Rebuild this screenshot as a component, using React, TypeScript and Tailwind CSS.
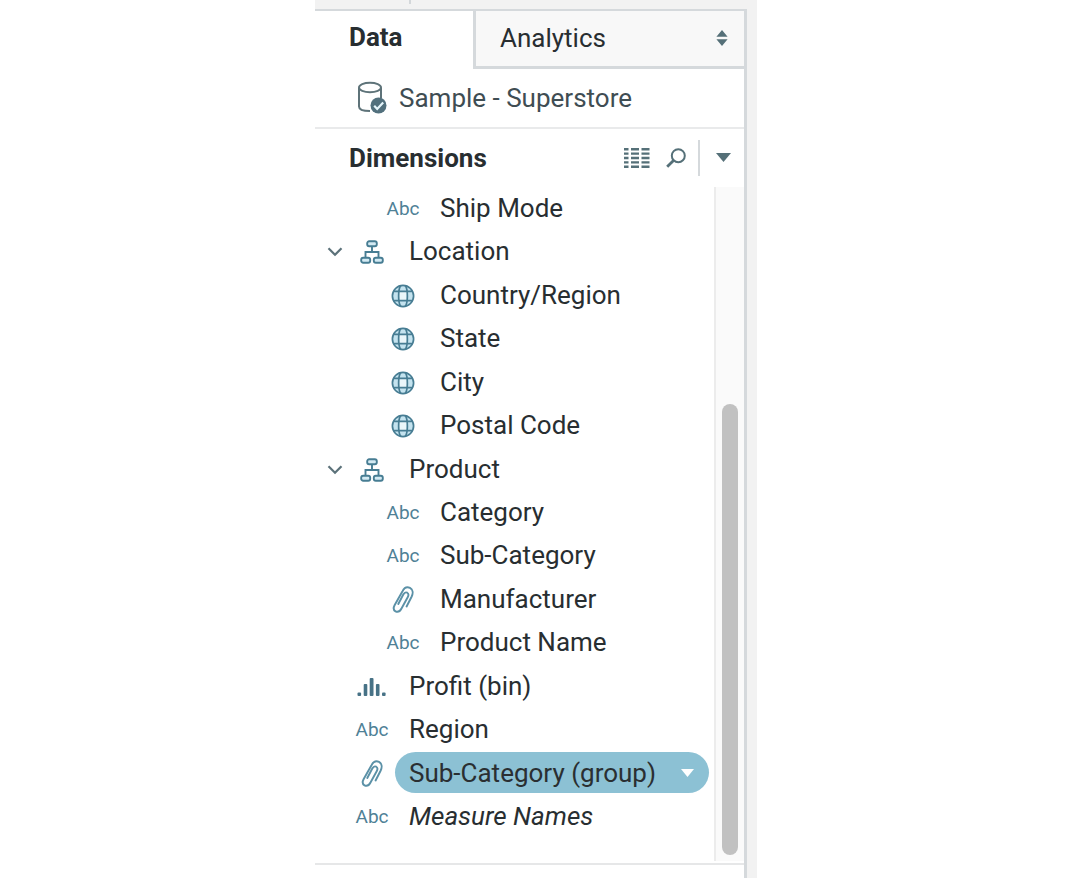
import React from "react";

type IconKind = "abc" | "globe" | "clip" | "hierarchy" | "bars";

interface Field {
  name: string;
  icon: IconKind;
  nested?: boolean;
  folder?: boolean;
  selected?: boolean;
  italic?: boolean;
}

const fields: Field[] = [
  { name: "Ship Mode", icon: "abc", nested: true },
  { name: "Location", icon: "hierarchy", folder: true },
  { name: "Country/Region", icon: "globe", nested: true },
  { name: "State", icon: "globe", nested: true },
  { name: "City", icon: "globe", nested: true },
  { name: "Postal Code", icon: "globe", nested: true },
  { name: "Product", icon: "hierarchy", folder: true },
  { name: "Category", icon: "abc", nested: true },
  { name: "Sub-Category", icon: "abc", nested: true },
  { name: "Manufacturer", icon: "clip", nested: true },
  { name: "Product Name", icon: "abc", nested: true },
  { name: "Profit (bin)", icon: "bars" },
  { name: "Region", icon: "abc" },
  { name: "Sub-Category (group)", icon: "clip", selected: true },
  { name: "Measure Names", icon: "abc", italic: true },
];

function FieldIcon({ kind }: { kind: IconKind }) {
  switch (kind) {
    case "abc":
      return <span className="text-[19px] leading-6 text-[#4f8196]">Abc</span>;
    case "globe":
      return (
        <svg width="24" height="24" viewBox="0 0 24 24" fill="none" stroke="#477d93" strokeWidth="1.7" aria-hidden="true">
          <circle cx="12" cy="12" r="10.6" fill="#c4e3ef" />
          <path d="M8.2 7h7.600v10H8.200z" fill="#eaf6fa" stroke="none" />
          <path d="M9.500 1.800C7 6 7 18 9.500 22.200M14.500 1.800C17 6 17 18 14.500 22.200M2.500 7.300h19M2.500 16.700h19" />
        </svg>
      );
    case "clip":
      return (
        <svg width="22" height="27" viewBox="0 0 22 27" fill="none" stroke="#5b91a7" strokeWidth="1.9" strokeLinecap="round" aria-hidden="true">
          <path d="M14.600 20.500 19.700 10.500C21.400 6.800 20.800 3.300 18 1.900C15.200.6 12.200 1.900 10.500 5.200L2.700 19C1.100 22 1.500 24.200 3.500 25.300C5.600 26.400 8 25.300 9.500 22.500L15.700 11.200C16.800 9.100 16.600 7.500 15.200 6.700C13.800 6 12.300 6.700 11.300 8.500L6.300 18" />
        </svg>
      );
    case "hierarchy":
      return (
        <svg width="24" height="24" viewBox="0 0 24 24" fill="none" stroke="#477d93" strokeWidth="1.9" aria-hidden="true">
          <rect x="7.200" y="1.300" width="9.600" height="5" rx="2" fill="#d3eaf3" />
          <rect x="1.200" y="17.700" width="9" height="5" rx="2" fill="#d3eaf3" />
          <rect x="13.800" y="17.700" width="9" height="5" rx="2" fill="#d3eaf3" />
          <path d="M12 6v6M5.500 18v-6h13v6" />
        </svg>
      );
    case "bars":
      return (
        <svg width="30" height="20" viewBox="0 0 30 20" fill="#477286" aria-hidden="true">
          <rect x="0.500" y="15.500" width="3.600" height="3.500" rx="1" />
          <rect x="6.700" y="7" width="3.600" height="12" rx="1" />
          <rect x="12.700" y="1" width="3.800" height="18" rx="1" />
          <rect x="18.900" y="7" width="3.600" height="12" rx="1" />
          <rect x="25" y="15.500" width="3.600" height="3.500" rx="1" />
        </svg>
      );
  }
}

function FieldRow({ field }: { field: Field }) {
  return (
    <li className={field.nested ? "flex items-center pl-[31px]" : "flex items-center"}>
      <span className="flex w-10 shrink-0 justify-center">
        {field.folder && (
          <button type="button" aria-label={"Collapse " + field.name} className="pt-0.5">
            <svg width="16" height="10" viewBox="0 0 16 10" fill="none" stroke="#5c727a" strokeWidth="2.2" aria-hidden="true">
              <path d="M1.500 1.200 8 7.800l6.500-6.600" />
            </svg>
          </button>
        )}
      </span>
      <span className="flex w-[34px] shrink-0 justify-center pt-0.5">
        <FieldIcon kind={field.icon} />
      </span>
      {field.selected ? (
        <button
          type="button"
          className="ml-1.5 mr-[5px] flex h-[41px] grow items-center justify-between rounded-full bg-[#8cc1d4] pl-3.5 pr-[15px] text-[#2a2f32]"
        >
          <span className="whitespace-nowrap">{field.name}</span>
          <svg width="13" height="8" viewBox="0 0 13 8" fill="#ffffff" aria-hidden="true">
            <path d="M0 0h13L6.500 8z" />
          </svg>
        </button>
      ) : (
        <span className={field.italic ? "ml-5 whitespace-nowrap italic" : "ml-5 whitespace-nowrap"}>{field.name}</span>
      )}
    </li>
  );
}

export default function App() {
  return (
    <div className="flex min-h-screen justify-center bg-white pb-0.5 pr-1.5 font-['Roboto','Liberation_Sans',sans-serif] text-[26px] leading-8 text-[#282e31]">
      <div className="flex w-full max-w-[442px] flex-col bg-[#f2f2f2]">
        <div className="flex h-[9px] shrink-0">
          <span className="ml-[94px] h-1 w-0.5 bg-[#d3d7da]" />
        </div>
        <aside className="mr-2.5 flex grow flex-col border-r-[3px] border-t-2 border-[#d5d9dc] bg-white">
          <div role="tablist" className="flex h-[58px] shrink-0">
            <button type="button" role="tab" aria-selected="true" className="w-[158px] pb-1.5 pl-[34px] text-left font-bold">
              Data
            </button>
            <button
              type="button"
              role="tab"
              aria-selected="false"
              className="flex grow items-center justify-between border-b-[3px] border-l-[3px] border-[#d5d9dc] bg-[#f8f8f8] pb-0.5 pl-6 pr-4"
            >
              <span>Analytics</span>
              <svg width="12" height="16" viewBox="0 0 12 16" fill="#557078" aria-hidden="true">
                <path d="M6 0l5.600 6.800H.4zM6 16 .4 9.200h11.200z" />
              </svg>
            </button>
          </div>

          <button type="button" className="flex h-[60px] shrink-0 items-center border-b-2 border-[#e9eaeb] pl-[42px] text-[#3f4d53]">
            <svg width="31" height="34" viewBox="0 0 31 34" fill="none" aria-hidden="true">
              <path d="M2 7v18.500C2 28.600 6.500 30 13 30M24 7v10" stroke="#5e7379" strokeWidth="2" />
              <ellipse cx="13" cy="6.500" rx="11" ry="4.700" stroke="#5e7379" strokeWidth="2" />
              <circle cx="21.500" cy="24.500" r="8" fill="#52707d" />
              <path d="M17.200 24.800l3 3.200 6-6.500" stroke="#e6f6fc" strokeWidth="2.200" />
            </svg>
            <span className="ml-[11px]">Sample - Superstore</span>
          </button>

          <header className="flex h-[57px] shrink-0 items-center">
            <h2 className="ml-[34px] grow font-bold">Dimensions</h2>
            <button type="button" aria-label="View data" className="mr-4">
              <svg width="26" height="20" viewBox="0 0 26 20" stroke="#557078" strokeWidth="2.400" aria-hidden="true">
                <path d="M0 1.200h4.500M7 1.200h8M17.500 1.200h8M0 5.600h4.500M7 5.600h8M17.500 5.600h8M0 10h4.500M7 10h8M17.500 10h8M0 14.400h4.500M7 14.400h8M17.500 14.400h8M0 18.800h4.500M7 18.800h8M17.500 18.800h8" />
              </svg>
            </button>
            <button type="button" aria-label="Find field" className="mr-3">
              <svg width="20" height="20" viewBox="0 0 20 20" fill="none" stroke="#557078" aria-hidden="true">
                <circle cx="12.300" cy="7.700" r="6.500" strokeWidth="2" />
                <path d="M7.500 12.500 1.200 18.800" strokeWidth="2.800" />
              </svg>
            </button>
            <span className="h-9 w-0.5 bg-[#d5d9dc]" />
            <button type="button" aria-label="Dimensions menu" className="ml-4 mr-[13px]">
              <svg width="15" height="9" viewBox="0 0 15 9" fill="#557078" aria-hidden="true">
                <path d="M0 0h15L7.500 9z" />
              </svg>
            </button>
          </header>

          <div className="flex h-[679px] shrink-0 border-b-2 border-[#e6e7e8]">
            <ul className="grid h-[652px] grow auto-rows-fr">
              {fields.map((field) => (
                <FieldRow key={field.name} field={field} />
              ))}
            </ul>
            <div className="mb-0.5 mt-px flex w-[30px] shrink-0 flex-col items-center justify-end border-l-2 border-[#ececec] bg-[#fafafa] pb-1.5">
              <div className="h-[451px] w-4 rounded-full bg-[#c1c1c1]" />
            </div>
          </div>
        </aside>
      </div>
    </div>
  );
}
